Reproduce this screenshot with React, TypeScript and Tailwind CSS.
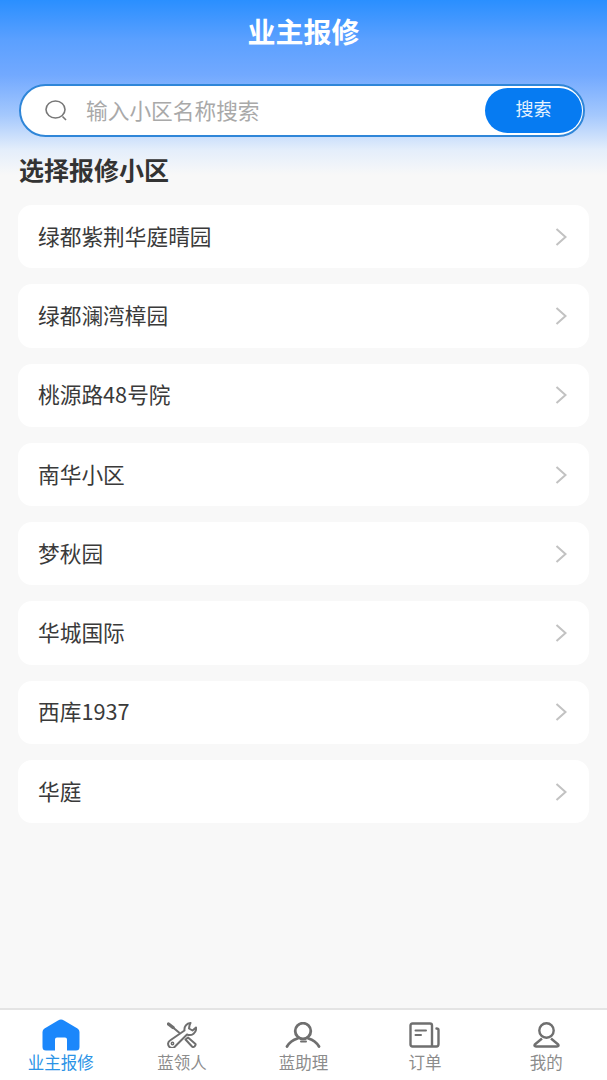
const FONT = '[font-family:"Noto_Sans_CJK_SC","Liberation_Sans",sans-serif]'

const communities = ['绿都紫荆华庭晴园', '绿都澜湾樟园', '桃源路48号院', '南华小区', '梦秋园', '华城国际', '西库1937', '华庭']

function HomeIcon() {
  return (
    <svg width="38" height="32" viewBox="0 0 38 32">
      <path
        fill="#1b87fb"
        d="M19 0.5 Q20.5 0.5 22 1.5 L35.5 9.5 Q37.5 10.8 37.5 13 V28 Q37.5 31.5 34 31.5 H25 V20.5 Q25 18.5 23 18.5 H15 Q13 18.5 13 20.5 V31.5 H4 Q0.5 31.5 0.5 28 V13 Q0.5 10.8 2.5 9.5 L16 1.5 Q17.5 0.5 19 0.5 Z"
      />
    </svg>
  )
}

function ToolsIcon() {
  return (
    <svg width="30" height="26" viewBox="0 0 30 26" fill="none" stroke="#6f6f6f" strokeWidth="2" strokeLinejoin="round" strokeLinecap="round">
      {/* screwdriver */}
      <path d="M1.5 2 L6 5.5" strokeWidth="3.4" />
      <path d="M6 5.5 L12 10.5" />
      <path d="M18.5 17.5 L21 15.5 L28.5 22 Q29 23 27.5 24.5 Q26 25.5 25 24.5 Z" />
      {/* wrench */}
      <path d="M23.5 1 A6.5 6.5 0 0 0 17.5 8.5 L3 18.5 A4 4 0 1 0 8.5 24 L20 12.5 A6.5 6.5 0 0 0 29 5.5 L25.5 8.5 L22 6.5 L22.5 3.5 Z" />
      <circle cx="5.5" cy="21.5" r="1.2" strokeWidth="1.4" />
    </svg>
  )
}

function AgentIcon() {
  return (
    <svg width="36" height="26" viewBox="0 0 36 26" fill="none" stroke="#6f6f6f" strokeWidth="2.8" strokeLinecap="round">
      <circle cx="18" cy="9" r="7.8" />
      <path d="M2 24.5 C5 19.5 9 17.5 12.5 16.5" />
      <path d="M23.5 16.5 C27 17.5 31 19.5 34 24.5" />
      <path d="M16 19.5 H21" strokeWidth="2" />
    </svg>
  )
}

function OrderIcon() {
  return (
    <svg width="31" height="26" viewBox="0 0 31 26" fill="none" stroke="#6f6f6f" strokeWidth="2.4" strokeLinejoin="round" strokeLinecap="round">
      <path d="M23 24.5 H3.5 Q1.5 24.5 1.5 22.5 V3.5 Q1.5 1.5 3.5 1.5 H21 Q23 1.5 23 3.5 V24.5 H27.5 Q29.5 24.5 29.5 22 V8 Q29.5 6.5 27.5 6.5" />
      <path d="M6.5 8.5 H17 M6.5 13 H12" strokeWidth="2" />
    </svg>
  )
}

function MineIcon() {
  return (
    <svg width="27" height="26" viewBox="0 0 27 26" fill="none" stroke="#6f6f6f" strokeWidth="2.4" strokeLinejoin="round">
      <circle cx="13.5" cy="8.5" r="7.2" />
      <path d="M9 16.5 L1.8 22.5 Q0.8 24.5 3 24.5 H24 Q26.2 24.5 25.2 22.5 L18 16.5" />
    </svg>
  )
}

const tabs = [
  { label: '业主报修', icon: <HomeIcon />, active: true },
  { label: '蓝领人', icon: <ToolsIcon />, active: false },
  { label: '蓝助理', icon: <AgentIcon />, active: false },
  { label: '订单', icon: <OrderIcon />, active: false },
  { label: '我的', icon: <MineIcon />, active: false },
]

export default function App() {
  return (
    <div className={`${FONT} relative flex flex-col h-[1080px] w-[607px] overflow-hidden bg-[#f8f8f8] bg-[linear-gradient(180deg,#2a8fff_0px,#5ba0ff_40px,#72a9ff_75px,#a4c8fd_115px,#e4eefb_150px,#f8f8f8_175px)]`}>
      <h1 className="mt-[14px] h-[34px] text-center text-[28px] leading-[34px] font-bold text-white">业主报修</h1>

      {/* Search */}
      <div className="mt-[36px] mx-[19px] w-[566px] h-[53px] flex items-center rounded-full border-2 border-[#2f86d8] bg-white pl-[24px] pr-[1px]">
        <svg width="24" height="21" viewBox="0 0 24 21" fill="none" stroke="#777777" strokeWidth="1.6" className="shrink-0">
          <ellipse cx="10.5" cy="9.5" rx="9.5" ry="8.5" />
          <path d="M17.5 16.5 L21 20" />
        </svg>
        <span className="ml-[17px] text-[21.7px] leading-[30px] pb-[2px] text-[#a9a9a9]">输入小区名称搜索</span>
        <button className="ml-auto w-[97px] h-[45px] rounded-full bg-[#067bf2] text-[18px] leading-[41px] pb-[4px] text-white/90">搜索</button>
      </div>

      <h2 className="mt-[18px] ml-[19px] h-[32px] text-[25px] leading-[29px] font-bold text-[#333333]">选择报修小区</h2>

      {/* List */}
      <div className="mt-[18px] mx-[18px] flex flex-col gap-[16px]">
        {communities.map((name) => (
          <div key={name} className="h-[63.3px] flex items-center justify-between rounded-[14px] bg-white pl-[20px] pr-[22px]">
            <span className="text-[21.7px] leading-[30px] pb-[2px] text-[#3a3a3a]">{name}</span>
            <svg width="12" height="20" viewBox="0 0 12 20" fill="none" stroke="#c2c2c2" strokeWidth="2">
              <path d="M1.5 2 L10.5 10 L1.5 18" />
            </svg>
          </div>
        ))}
      </div>

      {/* Tab bar */}
      <nav className="mt-auto h-[72px] grid grid-cols-5 border-t-2 border-[#e4e4e4] bg-white">
        {tabs.map((t) => (
          <div key={t.label} className="flex flex-col items-center">
            <div className="h-[37px] mt-[6px] flex items-center justify-center">{t.icon}</div>
            <span className={`text-[16.5px] leading-[18px] ${t.active ? 'text-[#2b93e6]' : 'text-[#8c8c8c]'}`}>{t.label}</span>
          </div>
        ))}
      </nav>
    </div>
  )
}
